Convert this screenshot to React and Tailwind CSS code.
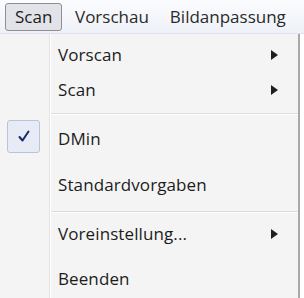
const font = { fontFamily: '"Open Sans", "Noto Sans", sans-serif' };

function Arrow() {
  return (
    <svg width="7" height="10" viewBox="0 0 7 10" className="shrink-0">
      <path d="M0 0 L7 5 L0 10 Z" fill="#1f1f1f" />
    </svg>
  );
}

function Item({ label, sub, checked, h }) {
  return (
    <div className={`flex items-center ${h}`}>
      <div className="w-[49px] shrink-0 flex justify-center items-center self-stretch">
        {checked && (
          <div className="w-[33px] h-[33px] ml-[-2px] mt-[-6px] rounded-[3px] border border-[#b6c4dc] bg-[#e6ebf6] flex items-center justify-center">
            <svg width="14" height="14" viewBox="0 0 14 14">
              <path d="M2.5 8 L5.5 11.5 L11.5 2.5" fill="none" stroke="#1d2a63" strokeWidth="2" strokeLinejoin="round" strokeLinecap="round" />
            </svg>
          </div>
        )}
      </div>
      <div className="flex-1 pl-[9px] pr-[20px] flex items-center justify-between text-[17px] text-[#1c1c1c] tracking-[0.1px]">
        <span>{label}</span>
        {sub && <Arrow />}
      </div>
    </div>
  );
}

function Sep({ h, top }) {
  return (
    <div className={`flex ${h}`}>
      <div className="w-[49px] shrink-0" />
      <div className={`flex-1 ${top}`}>
        <div className="h-px bg-[#dcdcdc]" />
        <div className="h-px bg-white" />
      </div>
    </div>
  );
}

export default function App() {
  return (
    <div className="w-[304px] h-[298px] overflow-hidden bg-white" style={font}>
      <div className="h-[34px] flex items-center px-[5px] bg-gradient-to-b from-[#fbfcfe] to-[#eef1f7] border-b border-[#dde2ea] text-[17px] text-[#2a2a2a] whitespace-nowrap">
        <div className="h-[28px] w-[57px] pl-[9px] flex items-center rounded-[3px] border border-[#8e8e96] bg-[#e2e3e8] text-[#1c1c1c]">Scan</div>
        <div className="ml-[13px]">Vorschau</div>
        <div className="ml-[21px]">Bildanpassung</div>
      </div>
      <div className="w-[300px] h-[264px] bg-[#f4f4f4] border-r-2 border-[#a9a9a9] relative">
        <div className="absolute left-[49px] top-0 bottom-0 w-px bg-[#e3e3e3]" />
        <div className="absolute left-[50px] top-0 bottom-0 w-px bg-white" />
        <Item label="Vorscan" sub h="h-[40px] pt-[2px]" />
        <Item label="Scan" sub h="h-[32px]" />
        <Sep h="h-[13px]" top="pt-[7px]" />
        <Item label="DMin" checked h="h-[40px]" />
        <Item label="Standardvorgaben" h="h-[52px]" />
        <Sep h="h-[3px]" top="pt-0" />
        <Item label="Voreinstellung..." sub h="h-[40px]" />
        <Item label="Beenden" h="h-[50px]" />
      </div>
    </div>
  );
}
